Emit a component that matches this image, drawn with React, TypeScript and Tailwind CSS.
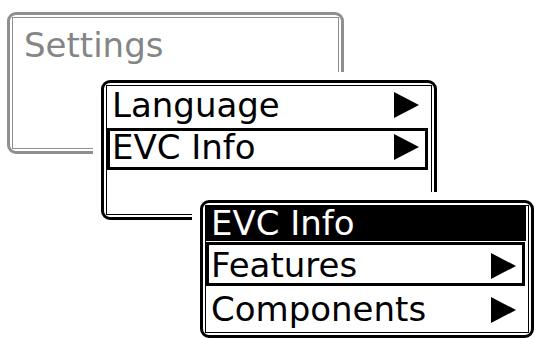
import React from "react";

function Arrow() {
  return (
    <svg width="25" height="26" viewBox="0 0 25 26" className="shrink-0">
      <polygon points="0,0 25,13 0,26" fill="#000" />
    </svg>
  );
}

function Frame({ pos, gray, children }: { pos: string; gray?: boolean; children?: React.ReactNode }) {
  return (
    <div
      className={`absolute rounded-[9px] border-[3px] bg-white p-[2px] shadow-[0_0_0_8px_#fff] ${
        gray ? "border-[#8f8f8f]" : "border-black"
      } ${pos}`}
    >
      <div className={`h-full border ${gray ? "border-[#8f8f8f]" : "border-black"}`}>{children}</div>
    </div>
  );
}

function Row({ label, selected, tall }: { label: string; selected?: boolean; tall?: boolean }) {
  return (
    <div
      className={`mr-[3px] flex items-start justify-between border-[3px] pl-[2px] pr-[6px] ${
        tall ? "h-[44px] pt-[6px]" : "h-[42px] pt-[2px]"
      } ${selected ? "border-black" : "border-transparent"}`}
    >
      <span className="leading-[28px]">{label}</span>
      <span className={tall ? "mt-[2px]" : "mt-[1px]"}>
        <Arrow />
      </span>
    </div>
  );
}

export default function App() {
  return (
    <div className="relative h-[338px] w-[536px] overflow-hidden bg-white font-['DejaVu_Sans',sans-serif] text-[34px] text-black">
      {/* Settings window (inactive) */}
      <Frame pos="left-[7px] top-[12px] h-[142px] w-[337px]" gray>
        <div className="pt-[10px] pl-[11px] leading-[34px] text-[#858585]">Settings</div>
      </Frame>

      {/* Settings submenu */}
      <Frame pos="left-[101px] top-[80px] h-[140px] w-[336px]">
        <Row label="Language" />
        <Row label="EVC Info" selected />
      </Frame>

      {/* EVC Info submenu */}
      <Frame pos="left-[200px] top-[200px] h-[138px] w-[334px]">
        <div className="mr-[2px] mb-[1px] h-[35px] bg-black pl-[5px] pt-[3px] leading-[28px] text-white">EVC Info</div>
        <Row label="Features" selected tall />
        <Row label="Components" tall />
      </Frame>
    </div>
  );
}
